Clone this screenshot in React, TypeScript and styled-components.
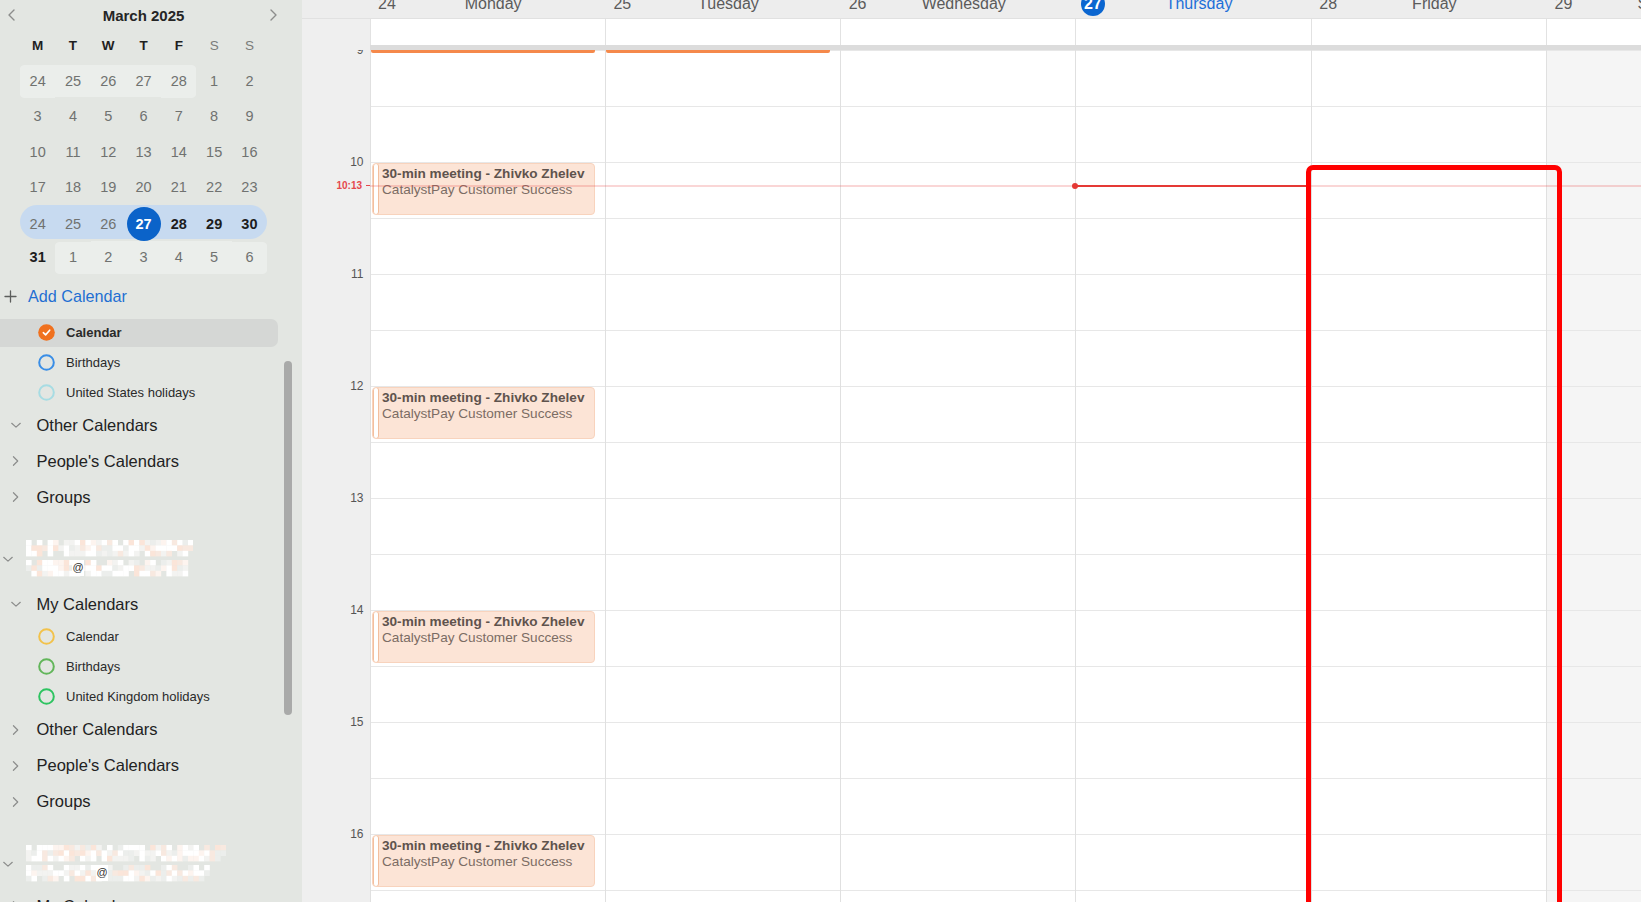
import styled, { createGlobalStyle } from "styled-components";

const GlobalStyle = createGlobalStyle`
  html, body { margin: 0; padding: 0; overflow: hidden; }
  body { font-family: "Liberation Sans", Arial, sans-serif; background: #ffffff; }
  * { box-sizing: border-box; }
`;

const COLS = "67.5px repeat(7, 235.3px)";
const HOUR = 112;

const Page = styled.div`
  display: flex;
  width: 1641px;
  height: 902px;
  overflow: hidden;
`;

/* ---------- sidebar ---------- */

const Sidebar = styled.aside`
  position: relative;
  flex: none;
  width: 302px;
  height: 100%;
  background: #e3e6e2;
  overflow: hidden;
  display: flex;
  flex-direction: column;
`;

const MonthBar = styled.div`
  flex: none;
  height: 28px;
  display: flex;
  align-items: center;
  justify-content: space-between;
  padding: 2px 21px 0 6px;
`;

const MonthTitle = styled.div`
  font-size: 15px;
  font-weight: 700;
  color: #252525;
`;

const NavBtn = styled.span`
  width: 14px;
  height: 16px;
  display: flex;
  align-items: center;
  justify-content: center;
`;

const CalGrid = styled.div`
  flex: none;
  margin-left: 20px;
  width: 247.1px;
  display: flex;
  flex-direction: column;
`;

const WeekRow = styled.div<{ $current?: boolean }>`
  display: grid;
  grid-template-columns: repeat(7, 35.3px);
  height: 35.3px;
  ${(p) =>
    p.$current &&
    `
    background: #c7daf0;
    border-radius: 17px;
    height: 34px;
    margin: 0.6px 0 0.7px;
  `}
`;

const WeekdayHead = styled.div<{ $weekend?: boolean }>`
  display: flex;
  align-items: center;
  justify-content: center;
  font-size: 13.5px;
  font-weight: ${(p) => (p.$weekend ? 400 : 700)};
  color: ${(p) => (p.$weekend ? "#7a7c7a" : "#1f1f1f")};
`;

type Tone = "dim" | "strong" | "today";

const DayCell = styled.div<{ $tone: Tone; $shade?: boolean; $edge?: "l" | "r" | "lr" }>`
  display: flex;
  align-items: center;
  justify-content: center;
  font-size: 14.5px;
  font-weight: ${(p) => (p.$tone === "dim" ? 400 : 700)};
  color: ${(p) => (p.$tone === "dim" ? "#707270" : p.$tone === "today" ? "#ffffff" : "#1d1d1d")};
  padding: 1.5px 0;
  background-clip: content-box;
  background-color: ${(p) => (p.$shade ? "#ebeeeb" : "transparent")};
  border-radius: ${(p) =>
    p.$edge === "lr" ? "5px" : p.$edge === "l" ? "5px 0 0 5px" : p.$edge === "r" ? "0 5px 5px 0" : "0"};
`;

const TodayDot = styled.span`
  width: 34px;
  height: 34px;
  border-radius: 50%;
  background: #0b63c9;
  display: flex;
  align-items: center;
  justify-content: center;
`;

const AddRow = styled.div`
  flex: none;
  margin-top: 7px;
  height: 28px;
  display: flex;
  align-items: center;
  gap: 11px;
  padding-left: 4px;
  font-size: 16.2px;
  color: #1f6fd2;
`;

const CalItem = styled.div<{ $selected?: boolean; $first?: boolean }>`
  flex: none;
  height: 28px;
  margin: ${(p) => (p.$first ? "8.6px" : "0.9px")} 24px 0.9px 0;
  display: flex;
  align-items: center;
  gap: 11.5px;
  padding-left: 37.5px;
  font-size: 13px;
  font-weight: ${(p) => (p.$selected ? 700 : 400)};
  color: #2a2a2a;
  background: ${(p) => (p.$selected ? "#d5d7d5" : "transparent")};
  border-radius: 0 7px 7px 0;
`;

const GroupRow = styled.div<{ $top?: number; $height?: number }>`
  flex: none;
  margin-top: ${(p) => p.$top ?? 0}px;
  height: ${(p) => p.$height ?? 36}px;
  display: flex;
  align-items: center;
  gap: 14.5px;
  padding-left: 10px;
  font-size: 16.5px;
  color: #222222;
`;

const AccountRow = styled.div<{ $gap: number }>`
  flex: none;
  margin-top: ${(p) => p.$gap}px;
  height: 33px;
  display: flex;
  align-items: center;
  gap: 12px;
  padding-left: 2px;
`;

const ScrollThumb = styled.div`
  position: absolute;
  left: 283.5px;
  top: 361px;
  width: 8.5px;
  height: 354px;
  border-radius: 5px;
  background: #a9aaa9;
`;

/* ---------- main week view ---------- */

const Main = styled.main`
  position: relative;
  flex: 1;
  min-width: 0;
  height: 100%;
  display: flex;
  flex-direction: column;
  background: #efefef;
  overflow: hidden;
`;

const HeaderRow = styled.div`
  flex: none;
  display: grid;
  grid-template-columns: ${COLS};
  height: 18.5px;
  overflow: hidden;
  background: #ededed;
  border-bottom: 1px solid #e1e1e1;
`;

const DayHead = styled.div<{ $today?: boolean }>`
  display: grid;
  grid-template-columns: 35px 1fr 23px;
  align-items: start;
  font-size: 16px;
  color: ${(p) => (p.$today ? "#1d6fd8" : "#5b5b5b")};
`;

const DayNum = styled.span<{ $today?: boolean }>`
  justify-self: center;
  margin-top: -8px;
  height: 24px;
  min-width: 24px;
  line-height: 24px;
  text-align: center;
  border-radius: 12px;
  ${(p) => p.$today && "background: #0b66d0; color: #ffffff; font-weight: 700;"}
`;

const DayName = styled.span`
  margin-top: -8px;
  line-height: 24px;
  text-align: center;
  white-space: nowrap;
`;

const AllDayRow = styled.div`
  flex: none;
  display: grid;
  grid-template-columns: ${COLS};
  height: 26.5px;
`;

const AllDayCell = styled.div`
  background: #ffffff;
  border-left: 1px solid #e2e2e2;
`;

const Divider = styled.div`
  flex: none;
  height: 5px;
  margin-left: 67.5px;
  background: #dcdcdc;
`;

const Timeline = styled.div`
  position: relative;
  flex: 1;
  overflow: hidden;
`;

const TimeGrid = styled.div`
  display: grid;
  grid-template-columns: ${COLS};
  margin-top: -0.5px;
`;

const Gutter = styled.div`
  display: flex;
  flex-direction: column;
`;

const HourSlot = styled.div`
  height: ${HOUR}px;
  display: flex;
  justify-content: flex-end;
  padding-right: 6px;
`;

const HourLabel = styled.span`
  margin-top: -7px;
  line-height: 14px;
  font-size: 12px;
  color: #555555;
`;

const DayColumn = styled.div<{ $weekend?: boolean }>`
  position: relative;
  height: ${HOUR * 9}px;
  border-left: 1px solid #e0e0e0;
  background-color: ${(p) => (p.$weekend ? "#f5f5f5" : "#ffffff")};
  background-image: repeating-linear-gradient(
    to bottom,
    #e7e7e7 0,
    #e7e7e7 1px,
    transparent 1px,
    transparent ${HOUR / 2}px
  );
`;

const EventCard = styled.div`
  position: absolute;
  left: 1.5px;
  right: 9.5px;
  height: 52px;
  display: flex;
  background: #fce4d6;
  border: 1px solid #f8d3bd;
  border-radius: 4px;
  overflow: hidden;
`;

const EventStripe = styled.span`
  flex: none;
  width: 6px;
  margin: -1px 0;
  background: #ffffff;
  border: 1px solid #f3bf9e;
  border-radius: 3px;
`;

const EventBody = styled.div`
  padding: 1.5px 0 0 3px;
  font-size: 13.6px;
  line-height: 16.7px;
  white-space: nowrap;
`;

const EventTitle = styled.div`
  font-weight: 700;
  color: #5f534d;
`;

const EventSub = styled.div`
  color: #7b6c64;
`;

const EventTail = styled.div`
  position: absolute;
  top: 0;
  left: 0.5px;
  right: 10px;
  height: 3.5px;
  background: #f5894b;
  border-radius: 0 0 2px 2px;
`;

const NowRow = styled.div`
  position: absolute;
  left: 0;
  right: 0;
  top: 135.7px;
  height: 0;
  display: grid;
  grid-template-columns: ${COLS};
  grid-template-rows: 0;
`;

const NowLabel = styled.div`
  grid-column: 1;
  grid-row: 1;
  justify-self: end;
  display: flex;
  align-items: center;
  gap: 4px;
  transform: translateY(-50%);
  font-size: 10px;
  font-weight: 700;
  color: #e5484d;
`;

const NowTick = styled.span`
  width: 3.5px;
  height: 1px;
  background: #e5484d;
`;

const NowLine = styled.div`
  grid-column: 2 / -1;
  grid-row: 1;
  height: 1px;
  transform: translateY(-50%);
  background: rgba(232, 70, 70, 0.45);
`;

const NowStrong = styled.div`
  position: relative;
  grid-column: 5;
  grid-row: 1;
  height: 2px;
  transform: translateY(-50%);
  background: #e53935;

  &::before {
    content: "";
    position: absolute;
    left: -3px;
    top: -2px;
    width: 6px;
    height: 6px;
    border-radius: 50%;
    background: #e53935;
  }
`;

const Annotation = styled.div`
  position: absolute;
  left: 1004px;
  top: 165px;
  width: 256px;
  height: 780px;
  border: 5px solid #ff0000;
  border-radius: 7px;
  pointer-events: none;
`;

/* ---------- small drawings ---------- */

function Chevron({ dir, size = 12, color = "#8c8d8c" }: { dir: "left" | "right" | "down"; size?: number; color?: string }) {
  const pts =
    dir === "left" ? "8,2 3,7 8,12" : dir === "right" ? "4,2 9,7 4,12" : "2,5 7,9.5 12,5";
  return (
    <svg width={size} height={size} viewBox="0 0 14 14" style={{ flex: "none" }}>
      <polyline points={pts} fill="none" stroke={color} strokeWidth="1.4" strokeLinecap="round" strokeLinejoin="round" />
    </svg>
  );
}

function Plus() {
  return (
    <svg width="13" height="13" viewBox="0 0 13 13" style={{ flex: "none" }}>
      <path d="M6.5 1v11M1 6.5h11" stroke="#5c5e5c" strokeWidth="1.3" strokeLinecap="round" />
    </svg>
  );
}

function Ring({ color }: { color: string }) {
  return (
    <svg width="17" height="17" viewBox="0 0 17 17" style={{ flex: "none" }}>
      <circle cx="8.5" cy="8.5" r="7.3" fill="none" stroke={color} strokeWidth="2" />
    </svg>
  );
}

function Checked() {
  return (
    <svg width="17" height="17" viewBox="0 0 17 17" style={{ flex: "none" }}>
      <circle cx="8.5" cy="8.5" r="8.3" fill="#f0711f" />
      <polyline points="5.3,8.7 7.6,10.9 11.7,6.2" fill="none" stroke="#ffffff" strokeWidth="1.6" strokeLinecap="round" strokeLinejoin="round" />
    </svg>
  );
}

const PALETTE = ["#ffffff", "#fdf4ef", "#fbe5d9", "#f3f3f1", "#ffffff", "#f8e9e0", "#eceeec", "#ffffff"];

function seeded(seed: number) {
  let s = seed;
  return () => {
    s = (s * 9301 + 49297) % 233280;
    return s / 233280;
  };
}

// pixelated, redacted account name + address
function Redacted({ top, bottom, at, seed }: { top: number; bottom: number; at: number; seed: number }) {
  const rnd = seeded(seed);
  const cell = 5.4;
  const rects: JSX.Element[] = [];
  const band = (y0: number, rows: number, width: number) => {
    for (let y = 0; y < rows; y++) {
      for (let x = 0; x * cell < width; x++) {
        const v = rnd();
        if ((y === 0 || y === rows - 1) && v < 0.18) continue;
        rects.push(
          <rect
            key={`${y0}-${x}-${y}`}
            x={x * cell}
            y={y0 + y * cell}
            width={cell + 0.2}
            height={cell + 0.2}
            fill={PALETTE[Math.floor(rnd() * PALETTE.length)]}
          />
        );
      }
    }
  };
  band(0, 3, top);
  band(20, 3, bottom);
  return (
    <svg width={Math.max(top, bottom) + 4} height={37} style={{ flex: "none" }}>
      {rects}
      <rect x={at - 6} y={20} width={12} height={16} fill="#ffffff" />
      <text x={at} y={31} fontSize="11" textAnchor="middle" fill="#333333" fontFamily="Liberation Sans, Arial, sans-serif">
        @
      </text>
    </svg>
  );
}

/* ---------- data ---------- */

type Day = { n: number; tone: Tone; shade?: boolean; edge?: "l" | "r" | "lr" };

const d = (n: number, tone: Tone = "dim", shade?: boolean, edge?: "l" | "r" | "lr"): Day => ({ n, tone, shade, edge });

const weeks: { days: Day[]; current?: boolean }[] = [
  { days: [d(24, "dim", true, "l"), d(25, "dim", true), d(26, "dim", true), d(27, "dim", true), d(28, "dim", true, "r"), d(1), d(2)] },
  { days: [3, 4, 5, 6, 7, 8, 9].map((n) => d(n)) },
  { days: [10, 11, 12, 13, 14, 15, 16].map((n) => d(n)) },
  { days: [17, 18, 19, 20, 21, 22, 23].map((n) => d(n)) },
  { current: true, days: [d(24), d(25), d(26), d(27, "today"), d(28, "strong"), d(29, "strong"), d(30, "strong")] },
  { days: [d(31, "strong"), d(1, "dim", true, "l"), d(2, "dim", true), d(3, "dim", true), d(4, "dim", true), d(5, "dim", true), d(6, "dim", true, "r")] },
];

const weekdays = ["M", "T", "W", "T", "F", "S", "S"];

const days = [
  { n: 24, name: "Monday" },
  { n: 25, name: "Tuesday" },
  { n: 26, name: "Wednesday" },
  { n: 27, name: "Thursday", today: true },
  { n: 28, name: "Friday" },
  { n: 29, name: "Saturday", weekend: true },
  { n: 30, name: "Sunday", weekend: true },
];

const hours = [9, 10, 11, 12, 13, 14, 15, 16, 17];
const meetingHours = [10, 12, 14, 16];

export default function App() {
  return (
    <Page>
      <GlobalStyle />
      <Sidebar>
        <MonthBar>
          <NavBtn>
            <Chevron dir="left" size={14} />
          </NavBtn>
          <MonthTitle>March 2025</MonthTitle>
          <NavBtn>
            <Chevron dir="right" size={14} />
          </NavBtn>
        </MonthBar>
        <CalGrid>
          <WeekRow>
            {weekdays.map((w, i) => (
              <WeekdayHead key={i} $weekend={i > 4}>
                {w}
              </WeekdayHead>
            ))}
          </WeekRow>
          {weeks.map((wk, i) => (
            <WeekRow key={i} $current={wk.current}>
              {wk.days.map((day, j) => (
                <DayCell key={j} $tone={day.tone} $shade={day.shade} $edge={day.edge}>
                  {day.tone === "today" ? <TodayDot>{day.n}</TodayDot> : day.n}
                </DayCell>
              ))}
            </WeekRow>
          ))}
        </CalGrid>

        <AddRow>
          <Plus />
          Add Calendar
        </AddRow>

        <CalItem $selected $first>
          <Checked />
          Calendar
        </CalItem>
        <CalItem>
          <Ring color="#3a8ee6" />
          Birthdays
        </CalItem>
        <CalItem>
          <Ring color="#a7dce3" />
          United States holidays
        </CalItem>
        <GroupRow>
          <Chevron dir="down" />
          Other Calendars
        </GroupRow>
        <GroupRow>
          <Chevron dir="right" />
          People's Calendars
        </GroupRow>
        <GroupRow>
          <Chevron dir="right" />
          Groups
        </GroupRow>

        <AccountRow $gap={27}>
          <Chevron dir="down" />
          <Redacted top={163} bottom={160} at={52} seed={17} />
        </AccountRow>

        <GroupRow $top={11.5} $height={35}>
          <Chevron dir="down" />
          My Calendars
        </GroupRow>
        <CalItem>
          <Ring color="#f2c24b" />
          Calendar
        </CalItem>
        <CalItem>
          <Ring color="#62b65a" />
          Birthdays
        </CalItem>
        <CalItem>
          <Ring color="#2ec461" />
          United Kingdom holidays
        </CalItem>
        <GroupRow $top={1}>
          <Chevron dir="right" />
          Other Calendars
        </GroupRow>
        <GroupRow>
          <Chevron dir="right" />
          People's Calendars
        </GroupRow>
        <GroupRow>
          <Chevron dir="right" />
          Groups
        </GroupRow>

        <AccountRow $gap={27.5}>
          <Chevron dir="down" />
          <Redacted top={198} bottom={182} at={76} seed={41} />
        </AccountRow>
        <GroupRow $top={8}>
          <Chevron dir="right" />
          My Calendars
        </GroupRow>

        <ScrollThumb />
      </Sidebar>

      <Main>
        <HeaderRow>
          <div />
          {days.map((day) => (
            <DayHead key={day.n} $today={day.today}>
              <DayNum $today={day.today}>{day.n}</DayNum>
              <DayName>{day.name}</DayName>
            </DayHead>
          ))}
        </HeaderRow>

        <AllDayRow>
          <div />
          {days.map((day) => (
            <AllDayCell key={day.n} />
          ))}
        </AllDayRow>
        <Divider />

        <Timeline>
          <TimeGrid>
            <Gutter>
              {hours.map((h) => (
                <HourSlot key={h}>
                  <HourLabel>{h}</HourLabel>
                </HourSlot>
              ))}
            </Gutter>
            {days.map((day, i) => (
              <DayColumn key={day.n} $weekend={day.weekend}>
                {i < 2 && <EventTail />}
                {i === 0 &&
                  meetingHours.map((h) => (
                    <EventCard key={h} style={{ top: (h - 9) * HOUR + 1.5 }}>
                      <EventStripe />
                      <EventBody>
                        <EventTitle>30-min meeting - Zhivko Zhelev</EventTitle>
                        <EventSub>CatalystPay Customer Success</EventSub>
                      </EventBody>
                    </EventCard>
                  ))}
              </DayColumn>
            ))}
          </TimeGrid>

          <NowRow>
            <NowLabel>
              10:13
              <NowTick />
            </NowLabel>
            <NowLine />
            <NowStrong />
          </NowRow>
        </Timeline>

        <Annotation />
      </Main>
    </Page>
  );
}
